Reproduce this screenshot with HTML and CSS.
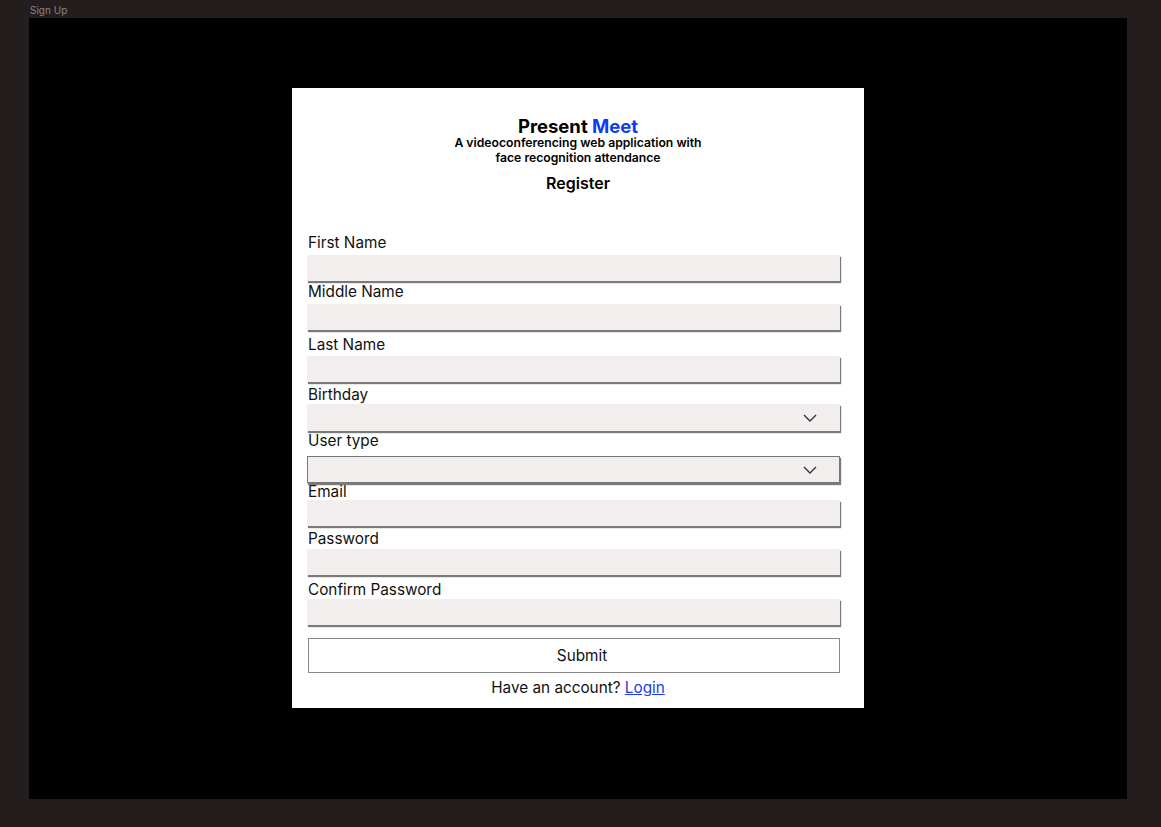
FILE: index.html
```html
<!DOCTYPE html>
<html>
<head>
<meta charset="utf-8">
<link rel="stylesheet" href="styles.css">
</head>
<body>
<div class="frame-label">Sign Up</div>
<div class="frame">
  <div class="card">
    <h1 class="title">Present <span class="accent">Meet</span></h1>
    <p class="subtitle">A videoconferencing web application with<br>face recognition attendance</p>
    <h2 class="heading">Register</h2>
    <form class="form">
      <div class="field f-first"><label class="label">First Name</label><div class="input"></div></div>
      <div class="field f-middle"><label class="label">Middle Name</label><div class="input"></div></div>
      <div class="field f-last"><label class="label">Last Name</label><div class="input"></div></div>
      <div class="field f-birthday"><label class="label">Birthday</label>
        <div class="input select">
          <svg class="chevron" width="14" height="8" viewBox="0 0 14 8"><path d="M1 1 L7 7 L13 1" fill="none" stroke="#333" stroke-width="1.4"/></svg>
        </div>
      </div>
      <div class="field f-type"><label class="label">User type</label>
        <div class="input select bordered">
          <svg class="chevron" width="14" height="8" viewBox="0 0 14 8"><path d="M1 1 L7 7 L13 1" fill="none" stroke="#333" stroke-width="1.4"/></svg>
        </div>
      </div>
      <div class="field f-email"><label class="label">Email</label><div class="input"></div></div>
      <div class="field f-password"><label class="label">Password</label><div class="input"></div></div>
      <div class="field f-confirm"><label class="label">Confirm Password</label><div class="input"></div></div>
      <div class="submit">Submit</div>
    </form>
    <p class="footer">Have an account? <a class="link" href="#">Login</a></p>
  </div>
</div>
</body>
</html>
```

FILE: styles.css
```css
* { box-sizing: border-box; }
html, body { margin: 0; padding: 0; }
body {
  background: #241d1d;
  width: 1161px;
  height: 827px;
  font-family: Inter, "Noto Sans", sans-serif;
  overflow: hidden;
}
.frame-label {
  height: 18px;
  padding: 4px 0 0 30px;
  font-size: 10px;
  line-height: 12px;
  color: #8a8282;
}
.frame {
  margin-left: 29px;
  width: 1098px;
  height: 781px;
  background: #000;
  display: flex;
  justify-content: center;
  padding-top: 70px;
}
.card {
  width: 572px;
  height: 620px;
  background: #fff;
  text-align: center;
}
.title {
  margin: 28px 0 0;
  font-size: 18.5px;
  line-height: 20px;
  font-weight: 700;
  color: #000;
}
.accent { color: #0e3bf6; }
.subtitle {
  margin: -1px 0 0;
  font-size: 12.2px;
  line-height: 15px;
  font-weight: 600;
  color: #000;
}
.heading {
  margin: 9px 0 0;
  font-size: 16px;
  line-height: 18px;
  font-weight: 600;
  color: #000;
}
.form {
  margin-top: 42px;
  padding: 0 24px 0 15px;
  text-align: left;
}
.label {
  display: block;
  font-size: 15.3px;
  line-height: 18px;
  color: #111;
  padding-left: 1px;
  margin-bottom: 3px;
}
.input {
  height: 26px;
  width: 533px;
  background: #f2eeee;
  box-shadow: 1px 2px 1px #7a7a7a;
  position: relative;
}
.select { height: 27px; }
.bordered { border: 1px solid #777; }
.select .chevron {
  position: absolute;
  right: 23px;
  top: 10px;
}
.bordered .chevron { right: 22px; top: 9px; }

.f-middle { margin-top: 2px; }
.f-last { margin-top: 6px; }
.f-last .label { margin-bottom: 2px; }
.f-birthday { margin-top: 4px; }
.f-birthday .label { margin-bottom: 0; }
.f-type { margin-top: 1px; }
.f-type .label { margin-bottom: 6px; }
.f-email { margin-top: 0; }
.f-email .label { margin-bottom: -1px; }
.f-password { margin-top: 4px; }
.f-password .label { margin-bottom: 1px; }
.f-confirm { margin-top: 6px; }
.f-confirm .label { margin-bottom: 0; }

.submit {
  margin-top: 13px;
  margin-left: 1px;
  width: 532px;
  height: 35px;
  border: 1px solid #888;
  font-size: 15.3px;
  line-height: 33px;
  text-align: center;
  padding-left: 16px;
  color: #111;
}
.footer {
  margin: 6px 0 0;
  text-align: center;
  font-size: 15.3px;
  line-height: 18px;
  color: #111;
}
.link { color: #1a3cf0; text-decoration: underline; }
```
